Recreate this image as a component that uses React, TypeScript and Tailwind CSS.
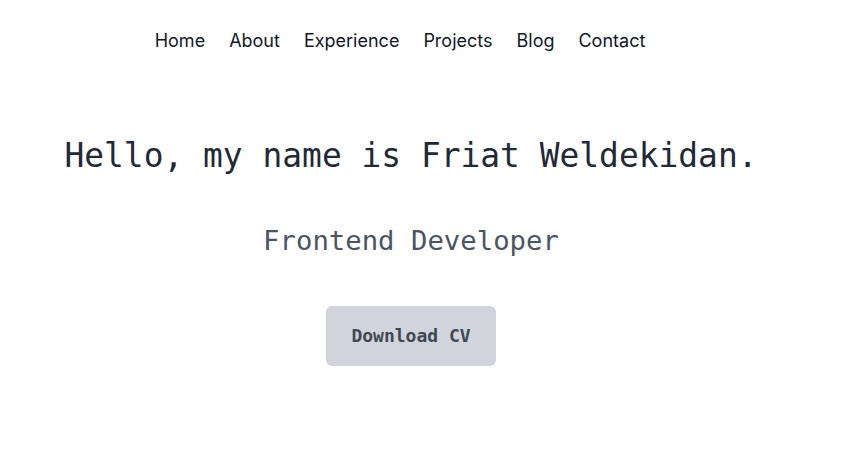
export default function App() {
  return (
    <div className="min-h-[456px] w-full bg-white">
      <header className="pt-[27px] pr-[45px]">
        <nav className="flex justify-center gap-[24px] font-['Inter',sans-serif] text-[18px] leading-[28px] text-[#111827]">
          <a href="#">Home</a>
          <a href="#">About</a>
          <a href="#">Experience</a>
          <a href="#">Projects</a>
          <a href="#">Blog</a>
          <a href="#">Contact</a>
        </nav>
      </header>

      <main className="flex flex-col items-center pr-[23px] pt-[81px] font-['DejaVu_Sans_Mono',monospace]">
        <h1 className="text-[32.9px] leading-[40px] text-[#1f2937]">
          Hello, my name is Friat Weldekidan.
        </h1>
        <h2 className="mt-[48px] text-[27.3px] leading-[33px] text-[#4b5563]">Frontend Developer</h2>
        <button className="mt-[49px] rounded-md bg-[#d1d5db] px-[25px] py-[19px] text-[18px] font-bold leading-[22px] text-[#3f4754]">
          Download CV
        </button>
      </main>
    </div>
  );
}
